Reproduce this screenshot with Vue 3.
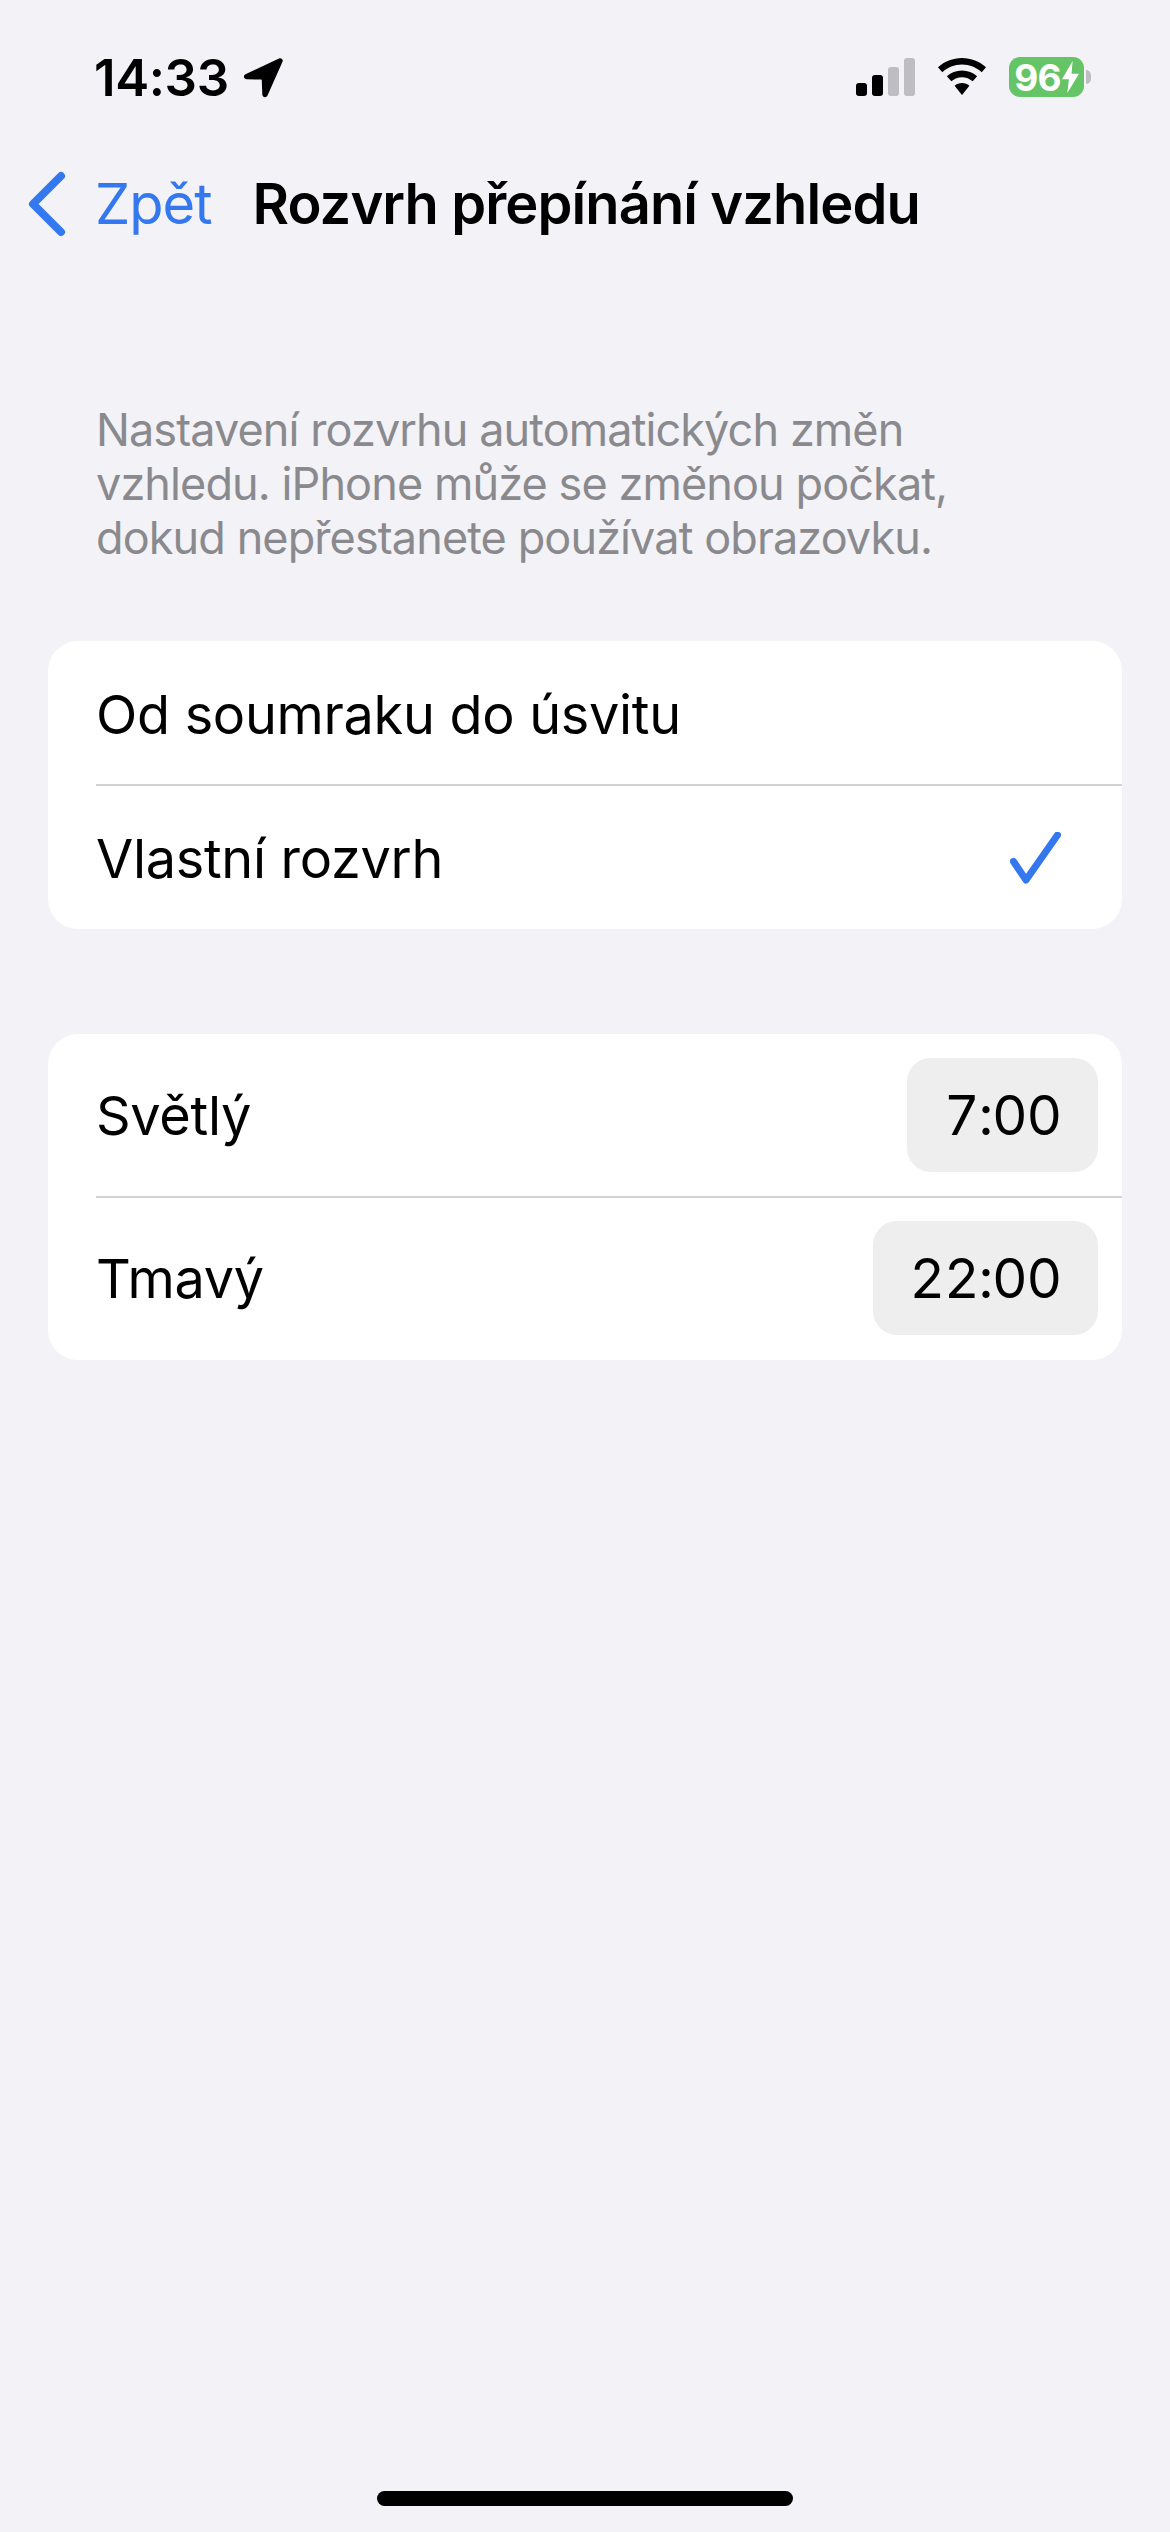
<template>
  <div class="screen">
    <div class="statusBar">
      <div class="timeBox">
        <span class="time">14:33</span>
        <svg class="locationIcon" viewBox="0 0 42 42">
          <path d="M37 2.500 3.500 18.200c-2.600 1.200-1.800 5 1 5.100l14.300.3c.6 0 1 .4 1 1l.5 14c.1 2.900 4 3.600 5.200 1L40.500 5.800C41.500 3.600 39.200 1.500 37 2.500Z" fill="#000" />
        </svg>
      </div>
      <div class="statusIcons">
        <div class="signal">
          <i class="bar on b1"></i>
          <i class="bar on b2"></i>
          <i class="bar b3"></i>
          <i class="bar b4"></i>
        </div>
        <svg class="wifiIcon" viewBox="0 0 50 38">
          <path d="M25 0C15.800 0 7.500 3.500 1 9.200l4.300 5C10.500 9.500 17.400 6.600 25 6.600s14.500 2.900 19.700 7.600l4.300-5C42.500 3.500 34.200 0 25 0Z" fill="#000" />
          <path d="M25 12.500c-5.800 0-11 2.200-15.100 5.700l4.400 5.100C17.200 20.800 21 19.200 25 19.200s7.800 1.600 10.700 4.100l4.400-5.100C36 14.700 30.800 12.500 25 12.500Z" fill="#000" />
          <path d="M25 25c-2.800 0-5.400 1-7.400 2.700L25 37l7.400-9.300C30.400 26 27.800 25 25 25Z" fill="#000" />
        </svg>
        <div class="battery">
          <div class="batteryBody">
            <span class="batteryLevel">96</span>
            <svg class="boltIcon" viewBox="0 0 16 30">
              <path d="M10 0 0 17h6.500L5 30 16 12H9Z" fill="#fff" />
            </svg>
          </div>
          <i class="batteryCap"></i>
        </div>
      </div>
    </div>

    <nav class="navBar">
      <div class="backLink">
        <svg class="backIcon" viewBox="0 0 40 66">
          <path d="M34 5 6 33l28 28" fill="none" stroke="#3478f0" stroke-width="8" stroke-linecap="round" stroke-linejoin="round" />
        </svg>
        <span>Zpět</span>
      </div>
      <h1 class="title">Rozvrh přepínání vzhledu</h1>
    </nav>

    <p class="description">
      Nastavení rozvrhu automatických změn<br />
      vzhledu. iPhone může se změnou počkat,<br />
      dokud nepřestanete používat obrazovku.
    </p>

    <section class="card modeCard">
      <div v-for="mode in modes" :key="mode.label" class="modeRow">
        <span>{{ mode.label }}</span>
        <svg v-if="mode.selected" class="checkIcon" viewBox="0 0 52 52">
          <path d="M3.500 29.500 16 48 47.500 3" fill="none" stroke="#3478f0" stroke-width="7" stroke-linecap="round" stroke-linejoin="round" />
        </svg>
      </div>
    </section>

    <section class="card timeCard">
      <div v-for="item in times" :key="item.label" class="timeRow">
        <span>{{ item.label }}</span>
        <span class="timePill">{{ item.time }}</span>
      </div>
    </section>

    <div class="homeIndicator"></div>
  </div>
</template>

<script setup>
const modes = [
  { label: 'Od soumraku do úsvitu', selected: false },
  { label: 'Vlastní rozvrh', selected: true }
]

const times = [
  { label: 'Světlý', time: '7:00' },
  { label: 'Tmavý', time: '22:00' }
]
</script>

<style>
body {
  margin: 0;
  background: #f2f2f7;
}
</style>

<style scoped>
.screen {
  display: flex;
  flex-direction: column;
  box-sizing: border-box;
  width: 1170px;
  height: 2532px;
  overflow: hidden;
  background: #f2f2f7;
  color: #000;
  font-family: Inter, 'Liberation Sans', sans-serif;
}

.statusBar {
  display: flex;
  justify-content: space-between;
  align-items: center;
  height: 78px;
  padding: 0 79px 0 94px;
  margin-top: 38px;
  flex-shrink: 0;
}

.timeBox {
  display: flex;
  align-items: center;
  gap: 13px;
}

.time {
  font-size: 51px;
  font-weight: 600;
  letter-spacing: -0.4px;
}

.locationIcon {
  width: 42px;
  height: 42px;
}

.statusIcons {
  display: flex;
  align-items: center;
  gap: 22px;
}

.signal {
  display: flex;
  align-items: flex-end;
  gap: 5px;
  height: 38px;
}

.bar {
  display: block;
  width: 11px;
  border-radius: 3px;
  background: #bdbdc2;
}

.bar.on {
  background: #000;
}

.b1 { height: 13px; }
.b2 { height: 21px; }
.b3 { height: 29px; }
.b4 { height: 38px; }

.wifiIcon {
  width: 50px;
  height: 38px;
}

.battery {
  display: flex;
  align-items: center;
  gap: 2px;
}

.batteryBody {
  display: flex;
  align-items: center;
  justify-content: center;
  gap: 1px;
  width: 75px;
  height: 40px;
  border-radius: 11px;
  background: #65c466;
}

.batteryLevel {
  color: #fff;
  font-size: 37px;
  font-weight: 700;
  letter-spacing: -0.8px;
}

.boltIcon {
  width: 17px;
  height: 32px;
}

.batteryCap {
  display: block;
  width: 5px;
  height: 14px;
  border-radius: 0 6px 6px 0;
  background: #bdbdc2;
}

.navBar {
  display: flex;
  align-items: center;
  height: 90px;
  margin-top: 43px;
  padding-left: 27px;
  flex-shrink: 0;
}

.backLink {
  display: flex;
  align-items: center;
  gap: 28px;
  color: #3478f0;
  font-size: 56px;
  letter-spacing: -1px;
}

.backIcon {
  width: 40px;
  height: 66px;
}

.title {
  margin: 0 0 0 41px;
  font-size: 56px;
  font-weight: 600;
  letter-spacing: -0.9px;
}

.description {
  margin: 154px 0 0;
  padding: 0 96px;
  color: #8a8a8e;
  font-size: 45px;
  line-height: 54px;
  letter-spacing: -0.9px;
}

.card {
  margin: 0 48px;
  border-radius: 30px;
  background: #fff;
  font-size: 54px;
  letter-spacing: -0.3px;
}

.modeCard {
  margin-top: 76px;
}

.timeCard {
  margin-top: 105px;
}

.modeRow,
.timeRow {
  display: flex;
  justify-content: space-between;
  align-items: center;
  box-sizing: border-box;
  padding-left: 48px;
}

.modeRow {
  height: 143px;
  padding-top: 3px;
  padding-right: 60px;
}

.timeRow {
  height: 162px;
  padding-right: 24px;
}

.modeRow + .modeRow,
.timeRow + .timeRow {
  position: relative;
}

.modeRow + .modeRow::before,
.timeRow + .timeRow::before {
  content: '';
  position: absolute;
  top: 0;
  right: 0;
  left: 48px;
  height: 2px;
  background: #d1d1d6;
}

.modeRow + .modeRow {
  height: 145px;
}

.timeRow + .timeRow {
  height: 164px;
}

.checkIcon {
  width: 52px;
  height: 52px;
}

.timePill {
  display: flex;
  align-items: center;
  box-sizing: border-box;
  height: 114px;
  padding: 0 37px;
  border-radius: 24px;
  background: #eeeeef;
  font-size: 55px;
  font-variant-numeric: tabular-nums;
  letter-spacing: -1.2px;
}

.homeIndicator {
  width: 416px;
  height: 15px;
  margin: auto auto 26px;
  border-radius: 8px;
  background: #000;
}
</style>
